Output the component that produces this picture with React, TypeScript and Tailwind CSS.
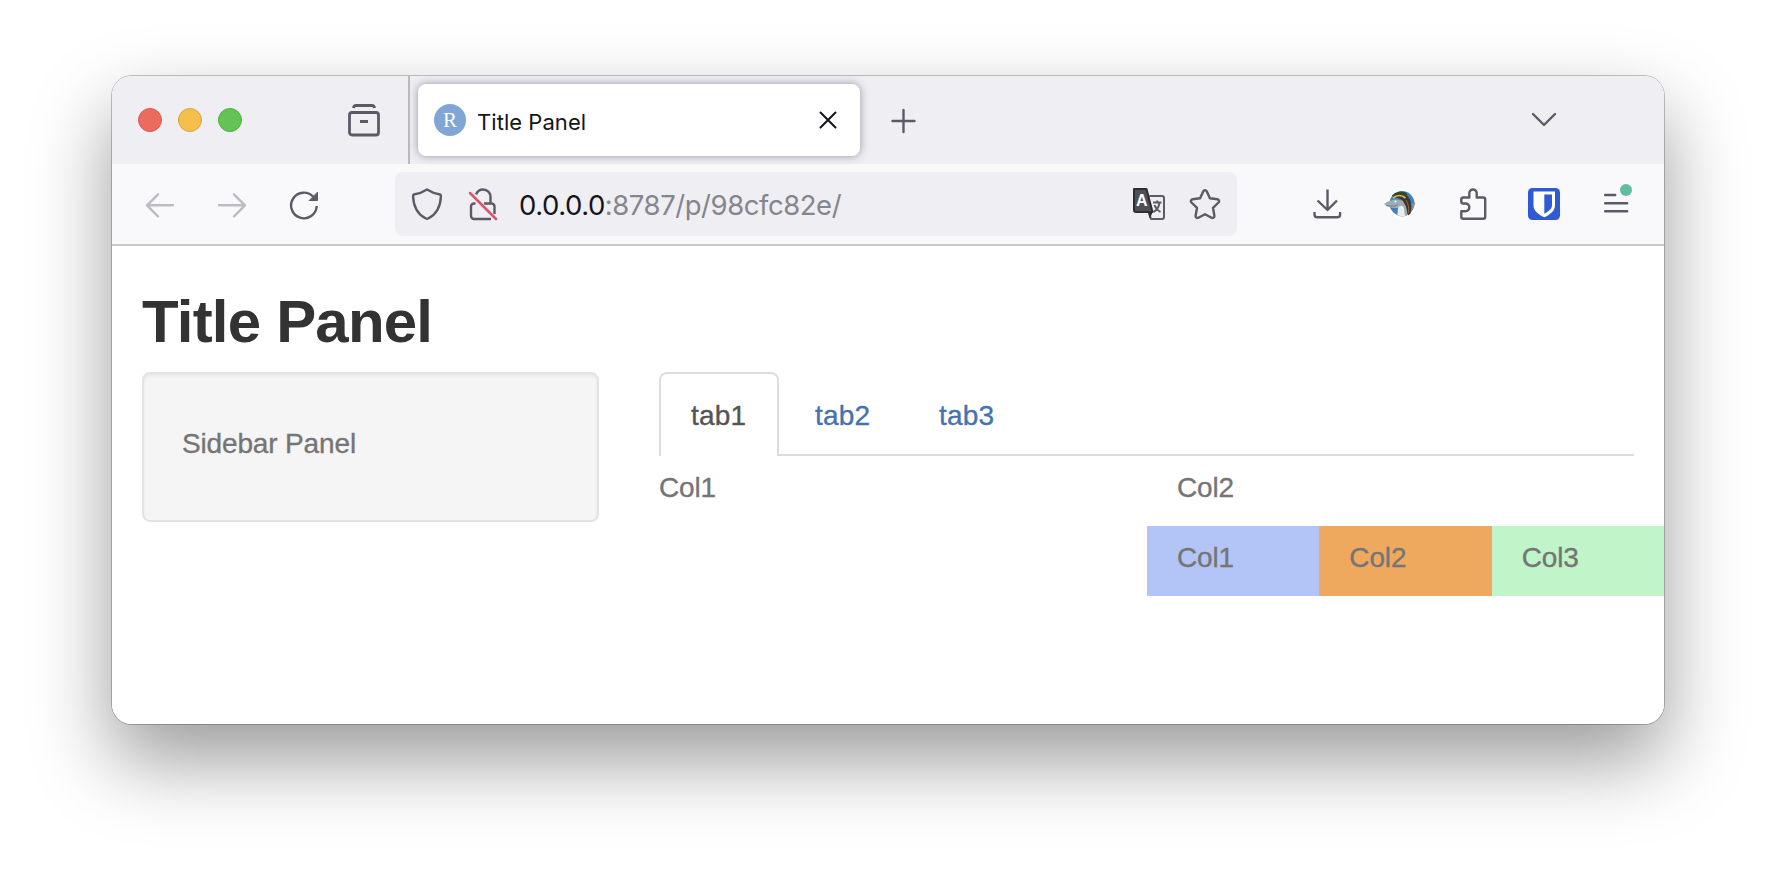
import type { ReactNode } from "react";

function Icon({ children, className = "" }: { children: ReactNode; className?: string }) {
  return (
    <svg
      viewBox="0 0 32 32"
      fill="none"
      stroke="currentColor"
      strokeWidth="2.4"
      strokeLinecap="round"
      strokeLinejoin="round"
      className={`size-8 shrink-0 overflow-visible text-[#5b5b66] ${className}`}
    >
      {children}
    </svg>
  );
}

function TabStrip() {
  return (
    <div className="flex h-[88px] items-center bg-[#efeef3] pl-[26px]">
      <div className="flex gap-4">
        <span className="size-6 rounded-full border border-[#d35f52] bg-[#ec6b5e]" />
        <span className="size-6 rounded-full border border-[#d6a73f] bg-[#f4bf4b]" />
        <span className="size-6 rounded-full border border-[#58ac44] bg-[#61c553]" />
      </div>
      <Icon className="ml-[106px]">
        <path d="M5.500 4c.2-1.700 1-2.500 2.500-2.500h16c1.500 0 2.300.8 2.500 2.500" strokeWidth="2.800" strokeLinecap="butt" />
        <rect x="1.500" y="8.500" width="29" height="22.500" rx="2.500" strokeWidth="2.800" />
        <path d="M12 17.500h8" strokeWidth="3" strokeLinecap="butt" />
      </Icon>
      <div className="ml-7 h-full w-0.5 bg-[#b9b9be]" />
      <div className="ml-2 flex h-[72px] w-[442px] items-center rounded-lg bg-white pl-4 shadow-[0_0_8px_rgba(100,100,115,0.65)]">
        <span className="flex size-8 items-center justify-center rounded-full bg-[#80a6d6] font-['Liberation_Serif',serif] text-[21px] leading-none text-white">
          R
        </span>
        <span className="ml-[11px] pt-1 font-['Inter',sans-serif] text-[22px] leading-8 tracking-[0.05px] text-[#15141a]">Title Panel</span>
        <Icon className="mr-4 ml-auto !text-[#15141a]">
          <path d="M8.500 8.500l15 15M23.500 8.500l-15 15" strokeWidth="2" />
        </Icon>
      </div>
      <Icon className="ml-[27px]">
        <path d="M16.500 6v22M5.500 17h22" />
      </Icon>
      <Icon className="mr-[104px] ml-auto">
        <path d="M5 10l11 11 11-11" />
      </Icon>
    </div>
  );
}

function AddressBar() {
  return (
    <div className="ml-[75px] flex h-16 w-[842px] items-center rounded-lg bg-[#efeef3] px-4">
      <Icon>
        <path d="M16 1.500c4 2.500 8.300 4.200 12.200 4.800 1.300.2 1.800 1 1.700 2.200-.4 9.800-5 18-12.400 21.800-1 .5-2 .5-3 0C7.100 26.500 2.500 18.300 2.100 8.500c-.1-1.200.4-2 1.700-2.200C7.700 5.700 12 4 16 1.500z" />
      </Icon>
      <Icon className="ml-6">
        <path d="M9 6.500c1.200-3 3.700-5 7-5 4.300 0 7.500 3.300 7.500 7.500v6M8.500 15.500H7a3 3 0 0 0-3 3v9.500a3 3 0 0 0 3 3h17M17 15.500h7.500a3 3 0 0 1 3 3V26" strokeLinecap="butt" />
        <path d="M3 5l26 26" stroke="#e2506a" strokeWidth="2.500" />
      </Icon>
      <span className="ml-5 pt-0.5 font-['Inter',sans-serif] text-[27.500px] leading-9 tracking-[-0.45px] whitespace-nowrap text-[#85858c]">
        <span className="text-[#15141a]">0.0.0.0</span>:8787/p/98cfc82e/
      </span>
      <Icon className="ml-auto">
        <path d="M17 8h12a2 2 0 0 1 2 2v19a2 2 0 0 1-2 2H18l-2-6" strokeWidth="2" />
        <path d="M1 1h12.500l6 23H3a2 2 0 0 1-2-2z" fill="#4f4f56" stroke="#2d2d33" strokeWidth="2" />
        <path d="M16 24l3 .2-2 5z" fill="#2d2d33" stroke="#2d2d33" strokeWidth="1" />
        <path d="M20 14.500h8.500M24.200 12.500v2M26.500 15c-.8 4-3 7.500-6 9M21.500 17c1.200 3.200 3.300 5.500 6 7" strokeWidth="2" strokeLinecap="butt" />
        <text x="3" y="18" fill="#fff" stroke="none" fontSize="16" fontWeight="700" fontFamily="Liberation Sans, sans-serif">
          A
        </text>
      </Icon>
      <Icon className="ml-6">
        <path d="M14.300 3.200c.7-1.500 2.700-1.500 3.400 0l3.200 7 7.500 1c1.700.2 2.300 2.200 1.100 3.300L24 19.800l1.400 7.900c.3 1.600-1.400 2.800-2.800 2L16 26.200l-6.600 3.500c-1.400.8-3.100-.4-2.800-2L8 19.800l-5.500-5.300c-1.200-1.100-.6-3.100 1.100-3.300l7.500-1z" />
      </Icon>
    </div>
  );
}

function SharkIcon() {
  return (
    <svg viewBox="0 0 32 32" className="ml-10 size-8 shrink-0 overflow-visible">
      <circle cx="17.500" cy="16.500" r="14" fill="#fff" />
      <circle cx="18" cy="15.500" r="12.500" fill="#3f83bd" />
      <path d="M24 17l7.500-2.500-3 7-4.500 3z" fill="#7f9099" />
      <path d="M0 16c4-3 8-4 11-4.500l8 1 4 6v9c-3 1.500-7 1.500-9.500-.5l.5-7c-5 .5-10-.5-14-4z" fill="#9dabb2" />
      <path d="M14 20c1.500-3 5-3 6 0l1 8c-2.500.6-5 .2-7.500-1z" fill="#e9ecec" />
      <path d="M8.500 9.500c4-6 13-7 17 1 2 4 2.500 9 1 15l-2.500 2-2-9-3-5.500c-3-3-6-3.500-10.500-3.500z" fill="#43342b" />
      <path d="M9 8.500c3.500-4 9.500-4.500 13.500-1.500" stroke="#34452f" strokeWidth="3" fill="none" />
      <path d="M9 10c4-3.200 9-3 12.500 0" stroke="#d9bd3c" strokeWidth="1.800" fill="none" />
      <path d="M22 12c2.500 4 3 8 2.500 13" stroke="#8a6a4a" strokeWidth="1" fill="none" />
      <circle cx="11.500" cy="13.500" r="1.100" fill="#fff" />
      <path d="M2 17.500l8 .8 4-1.800" stroke="#6b7a83" strokeWidth=".8" fill="none" />
    </svg>
  );
}

function Toolbar() {
  return (
    <div className="flex h-[82px] items-center border-b-2 border-[#c9c9cc] bg-[#f9f9fb] pl-8">
      <Icon className="!text-[#bdbcc3]">
        <path d="M29 17.300H3M14 6.300l-11 11 11 11" />
      </Icon>
      <Icon className="ml-10 !text-[#bdbcc3]">
        <path d="M3 17.300h26M18 6.300l11 11-11 11" />
      </Icon>
      <Icon className="ml-10">
        <path d="M25.500 9A12.800 12.800 0 1 0 28.700 18" strokeLinecap="butt" />
        <path d="M29.500 4.500v8h-8z" fill="currentColor" strokeWidth="1" />
      </Icon>
      <AddressBar />
      <Icon className="ml-[75px]">
        <path d="M15.500 1.500v20M5.500 12.500l10 9.500 9.500-9.500M2.500 24v2.500a2.800 2.800 0 0 0 2.800 2.800h20a2.800 2.800 0 0 0 2.800-2.800V24" strokeLinecap="butt" />
      </Icon>
      <SharkIcon />
      <Icon className="ml-10">
        <path d="M5.300 13.500v-2a2 2 0 0 1 2-2h6V5.200a3.700 3.700 0 0 1 7.400 0v4.300h6.500a2 2 0 0 1 2 2v17.300a2 2 0 0 1-2 2H7.300a2 2 0 0 1-2-2v-5.600h4.200a3.700 3.700 0 0 0 0-7.700H7.300a2 2 0 0 1-2-2z" />
      </Icon>
      <svg viewBox="0 0 32 32" className="ml-10 size-8 shrink-0">
        <rect width="32" height="32" rx="4.500" fill="#3059d5" />
        <path d="M5.500 3.500h21.500v14c0 5-4.500 8.800-10.700 11.800C10 26.300 5.500 22.500 5.500 17.500z" fill="#fff" />
        <path d="M16.300 6.500h7.700v11c0 3-3 5.800-7.700 8.300z" fill="#3059d5" />
      </svg>
      <div className="relative ml-10 size-8">
        <Icon>
          <path d="M5.200 7h10M5.200 15.200h22M5.200 23.200h22" />
        </Icon>
        <span className="absolute -top-1 left-5 size-3 rounded-full bg-[#61bda0]" />
      </div>
    </div>
  );
}

function TabPanel() {
  return (
    <div className="ml-[60px] w-[1005px]">
      <div className="mr-[30px] flex h-21 tracking-[0.2px] text-[#4673ad]">
        <div className="w-[120px] rounded-t-lg border-2 border-b-0 border-[#ddd] px-[30px] pt-[22px] text-[#555]">tab1</div>
        <div className="flex flex-1 border-b-2 border-[#ddd] pt-6">
          <div className="w-[124px] pl-9">tab2</div>
          <div className="pl-9">tab3</div>
        </div>
      </div>
      <div className="flex pt-3">
        <div className="w-[518px]">Col1</div>
        <div>Col2</div>
      </div>
      <div className="mt-[18px] ml-[488px] grid h-[70px] grid-cols-3">
        <div className="bg-[#b3c4f6] pt-3 pl-[30px]">Col1</div>
        <div className="bg-[#efa95f] pt-3 pl-[30px]">Col2</div>
        <div className="bg-[#c0f4c9] pt-3 pl-[30px]">Col3</div>
      </div>
    </div>
  );
}

export default function App() {
  return (
    <div className="h-[872px] w-[1776px] overflow-hidden bg-white px-28 pt-[76px]">
      <div className="h-[648px] w-[1552px] rounded-[20px] shadow-[0_0_0_1px_rgba(0,0,0,0.22),0_36px_80px_rgba(0,0,0,0.4)]">
        <div className="h-full overflow-hidden rounded-[20px] bg-white">
          <TabStrip />
          <Toolbar />
          <main className="pt-[43px] pl-[30px] font-['Liberation_Sans',Arial,sans-serif] text-[28px] leading-10 tracking-[-0.15px] text-[#757575] [-webkit-text-stroke:0.35px]">
            <h1 className="mb-[17px] text-[60px] leading-[66px] font-bold tracking-[-0.8px] text-[#333] [-webkit-text-stroke:0px]">
              Title Panel
            </h1>
            <div className="flex items-start">
              <aside className="h-[150px] w-[457px] rounded-lg border-2 border-[#e3e3e3] bg-[#f5f5f5] pt-[50px] pl-[38px] shadow-[inset_0_2px_3px_rgba(0,0,0,0.06)]">
                Sidebar Panel
              </aside>
              <TabPanel />
            </div>
          </main>
        </div>
      </div>
    </div>
  );
}
